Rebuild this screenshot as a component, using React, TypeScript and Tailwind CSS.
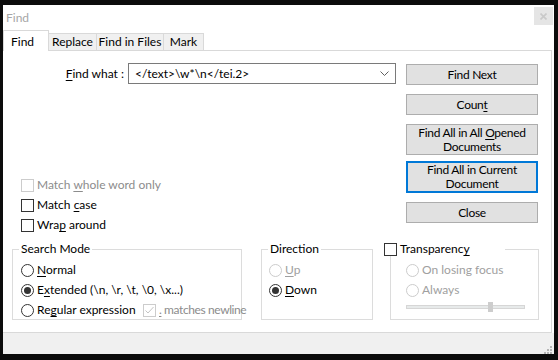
import React from "react";

const FONT = "font-['Lato',sans-serif] text-[12px] leading-none whitespace-nowrap";

function U({ c }: { c: string }) {
  return <span className="underline decoration-1 underline-offset-[2px]">{c}</span>;
}

function Check({ checked, disabled }: { checked?: boolean; disabled?: boolean }) {
  return (
    <span
      className={`w-[13px] h-[13px] shrink-0 border bg-white flex items-center justify-center ${
        disabled ? "border-[#cccccc]" : "border-[#333333]"
      }`}
    >
      {checked && (
        <svg width="11" height="11" viewBox="0 0 11 11">
          <path d="M1.5 5.5 L4 8 L9.5 2" stroke={disabled ? "#c4c4c4" : "#333"} fill="none" strokeWidth="1" />
        </svg>
      )}
    </span>
  );
}

function Radio({ checked, disabled }: { checked?: boolean; disabled?: boolean }) {
  return (
    <span
      className={`w-[13px] h-[13px] shrink-0 rounded-full border bg-white flex items-center justify-center ${
        disabled ? "border-[#cccccc]" : "border-[#333333]"
      }`}
    >
      {checked && <span className="w-[7px] h-[7px] rounded-full bg-[#333333]" />}
    </span>
  );
}

function Btn({ children, h, focus }: { children: React.ReactNode; h: string; focus?: boolean }) {
  return (
    <div
      className={`w-[132px] ${h} bg-[#e1e1e1] flex flex-col items-center justify-center text-center leading-[14px] tracking-[-0.3px] ${
        focus ? "border-2 border-[#0078d7]" : "border border-[#adadad]"
      }`}
    >
      {children}
    </div>
  );
}

export default function App() {
  return (
    <div className={`w-[558px] h-[360px] bg-[#0c0c0c] pl-[3px] pt-[5px] pr-[4px] pb-[6px] ${FONT} text-black`}>
      <div className="w-[551px] h-[349px] bg-white flex flex-col">
        {/* title */}
        <div className="h-[25px] flex items-start justify-between">
          <span className="pl-[3px] pt-[7px] text-[#a6a6a6]">Find</span>
          <div className="mt-[2px] mr-[1px] w-[19px] h-[18px] bg-[#e5e5e5] flex items-center justify-center">
            <svg width="7" height="7" viewBox="0 0 7 7">
              <path d="M0.5 0.5 L6.5 6.5 M6.5 0.5 L0.5 6.5" stroke="#c9c9c9" strokeWidth="1.6" />
            </svg>
          </div>
        </div>
        {/* tabs */}
        <div className="h-[21px] -mb-[1px] flex items-end relative z-10">
          <div className="w-[46px] h-[21px] bg-white border-l border-t border-r border-[#d9d9d9] pl-[7px] pt-[5px]">
            Find
          </div>
          <div className="w-[49px] -ml-px h-[17px] mb-[1px] bg-[#f0f0f0] border-l border-t border-r border-[#d9d9d9] flex items-center justify-center">
            Replace
          </div>
          <div className="w-[68px] -ml-px h-[17px] mb-[1px] bg-[#f0f0f0] border-l border-t border-r border-[#d9d9d9] flex items-center justify-center">
            Find in Files
          </div>
          <div className="w-[41px] -ml-px h-[17px] mb-[1px] bg-[#f0f0f0] border-l border-t border-r border-[#d9d9d9] flex items-center justify-center">
            Mark
          </div>
        </div>
        {/* panel */}
        <div className="w-[549px] h-[283px] border-t border-r border-b border-[#d9d9d9] bg-white pt-[12px]">
          <div className="flex">
            <div className="w-[393px] flex flex-col">
              <div className="h-[21px] flex items-center justify-end gap-[4px]">
                <span>
                  <U c="F" />
                  ind what :
                </span>
                <div className="w-[268px] h-[21px] border border-[#7a7a7a] flex items-center justify-between pl-[6px] pr-[6px]">
                  <span>{"</text>\\w*\\n</tei.2>"}</span>
                  <svg width="9" height="6" viewBox="0 0 9 6">
                    <path d="M0.5 0.5 L4.5 4.5 L8.5 0.5" stroke="#606060" fill="none" strokeWidth="1" />
                  </svg>
                </div>
              </div>
              <div className="mt-[91px] pl-[18px] flex flex-col">
                <div className="h-[20px] flex items-center gap-[3px] text-[#8c8c8c]">
                  <Check disabled />
                  <span>
                    Match <U c="w" />
                    hole word only
                  </span>
                </div>
                <div className="h-[20px] flex items-center gap-[3px]">
                  <Check />
                  <span>
                    Match <U c="c" />
                    ase
                  </span>
                </div>
                <div className="h-[20px] flex items-center gap-[3px]">
                  <Check />
                  <span>
                    Wra<U c="p" /> around
                  </span>
                </div>
              </div>
            </div>
            <div className="ml-[10px] pt-[1px] flex flex-col">
              <Btn h="h-[21px]">Find Next</Btn>
              <div className="mt-[9px]">
                <Btn h="h-[21px]">
                  <span>
                    Coun<U c="t" />
                  </span>
                </Btn>
              </div>
              <div className="mt-[9px]">
                <Btn h="h-[31px]">
                  <span>
                    Find All in All <U c="O" />
                    pened
                  </span>
                  <span>Documents</span>
                </Btn>
              </div>
              <div className="mt-[6px]">
                <Btn h="h-[32px]" focus>
                  <span>Find All in Current</span>
                  <span>Document</span>
                </Btn>
              </div>
              <div className="mt-[9px]">
                <Btn h="h-[21px]">Close</Btn>
              </div>
            </div>
          </div>
          {/* groups */}
          <div className="mt-[14px] pl-[9px] flex">
            <div className="relative w-[230px] h-[71px] border border-[#dcdcdc] pt-[10px] pl-[8px]">
              <span className="absolute -top-[7px] left-[6px] px-[2px] bg-white">Search Mode</span>
              <div className="h-[20px] flex items-center gap-[3px]">
                <Radio />
                <span>
                  <U c="N" />
                  ormal
                </span>
              </div>
              <div className="h-[20px] flex items-center gap-[3px]">
                <Radio checked />
                <span>
                  E<U c="x" />
                  tended (\n, \r, \t, \0, \x...)
                </span>
              </div>
              <div className="h-[20px] flex items-center">
                <div className="w-[122px] shrink-0 flex items-center gap-[3px]">
                  <Radio />
                  <span>
                    Re<U c="g" />
                    ular expression
                  </span>
                </div>
                <div className="flex items-center gap-[3px] text-[#8c8c8c]">
                  <Check checked disabled />
                  <span className="tracking-[-0.4px]">
                    <U c="." /> matches newline
                  </span>
                </div>
              </div>
            </div>
            <div className="relative ml-[19px] w-[112px] h-[71px] border border-[#dcdcdc] pt-[10px] pl-[7px]">
              <span className="absolute -top-[7px] left-[6px] px-[2px] bg-white">Direction</span>
              <div className="h-[20px] flex items-center gap-[3px] text-[#a0a0a0]">
                <Radio disabled />
                <span>
                  <U c="U" />p
                </span>
              </div>
              <div className="h-[20px] flex items-center gap-[3px]">
                <Radio checked />
                <span>
                  <U c="D" />
                  own
                </span>
              </div>
            </div>
            <div className="relative ml-[17px] w-[149px] h-[71px] border border-[#dcdcdc] pt-[10px] pl-[15px]">
              <div className="absolute -top-[8px] -left-[7px] w-[121px] h-[14px] bg-white flex items-center gap-[3px]">
                <Check />
                <span>
                  Transparenc<U c="y" />
                </span>
              </div>
              <div className="h-[20px] flex items-center gap-[3px] text-[#a0a0a0]">
                <Radio disabled />
                <span>On losing focus</span>
              </div>
              <div className="h-[20px] flex items-center gap-[3px] text-[#a0a0a0]">
                <Radio disabled />
                <span>Always</span>
              </div>
              <div className="relative mt-[2px] w-[119px] h-[10px] flex items-center">
                <div className="w-[119px] h-[4px] bg-[#e7eaea] border border-[#d6d6d6]" />
                <div className="absolute left-[82px] top-0 w-[5px] h-[10px] bg-[#cdcdcd]" />
              </div>
            </div>
          </div>
        </div>
        {/* bottom strip */}
        <div className="h-[21px] bg-[#f0f0f0] flex justify-end items-end pr-[2px]">
          <svg width="8" height="8" viewBox="0 0 8 8">
            <rect x="6" y="0" width="2" height="2" fill="#b5b5b5" />
            <rect x="3" y="3" width="2" height="2" fill="#b5b5b5" />
            <rect x="6" y="3" width="2" height="2" fill="#b5b5b5" />
            <rect x="0" y="6" width="2" height="2" fill="#b5b5b5" />
            <rect x="3" y="6" width="2" height="2" fill="#b5b5b5" />
            <rect x="6" y="6" width="2" height="2" fill="#b5b5b5" />
          </svg>
        </div>
      </div>
    </div>
  );
}
